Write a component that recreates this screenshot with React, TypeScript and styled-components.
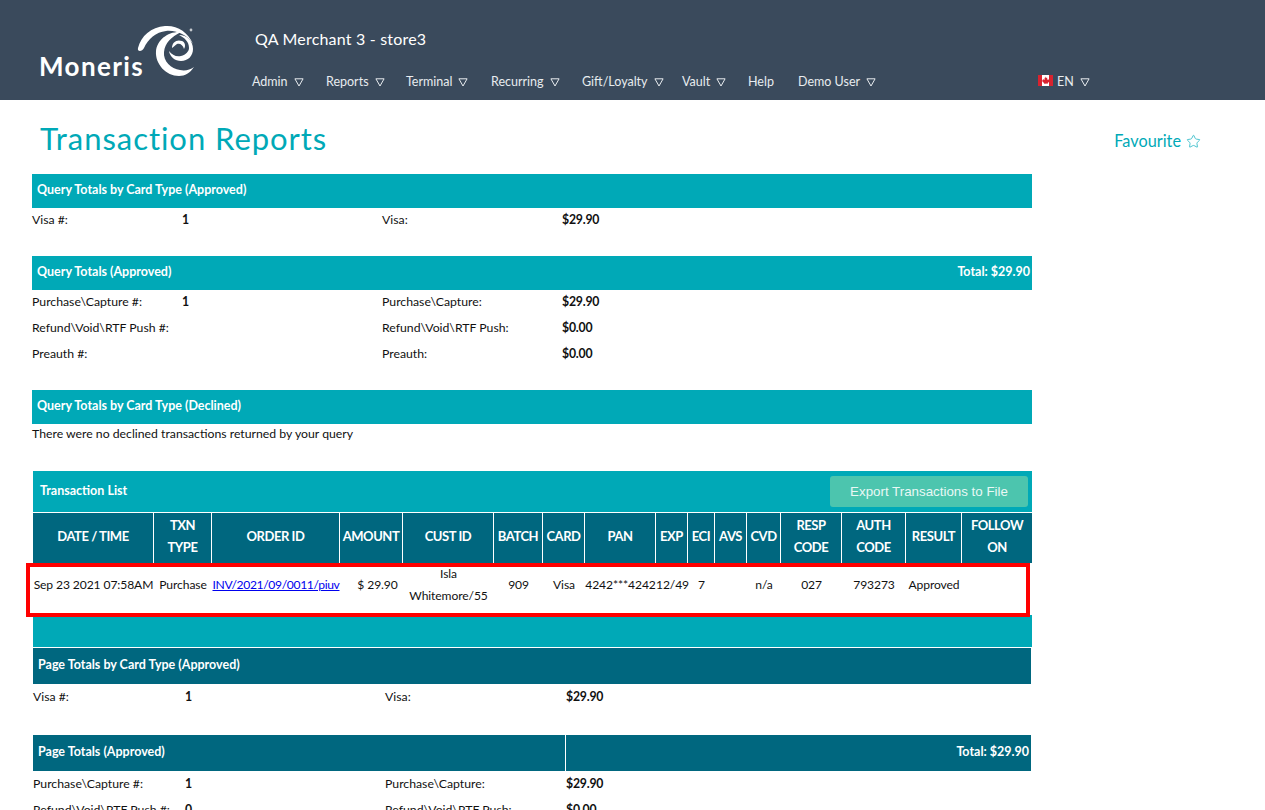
import React from "react";
import styled, { createGlobalStyle } from "styled-components";
import { Star } from "lucide-react";

const teal = "#00a9b7";
const darkTeal = "#00677f";
const font = `Lato, "Open Sans", "Liberation Sans", sans-serif`;

const GlobalStyle = createGlobalStyle`
  html, body {
    margin: 0;
    height: 810px;
    overflow: hidden;
    background: #fff;
    font-family: ${font};
    font-size: 12.25px;
    color: #111;
  }
`;

const Header = styled.header`
  height: 100px;
  background: #3a4a5c;
  display: flex;
  color: #fff;
`;

const LogoWrap = styled.div`
  width: 252px;
  position: relative;
`;

const LogoText = styled.span`
  position: absolute;
  left: 39px;
  top: 50px;
  font-size: 26px;
  font-weight: 700;
  letter-spacing: 1.4px;
  color: #fff;
`;

const Swirl = styled.svg`
  position: absolute;
  left: 135px;
  top: 22px;
`;

const HeaderMain = styled.div`
  flex: 1;
  display: flex;
  flex-direction: column;
`;

const MerchantName = styled.div`
  font-size: 16px;
  padding: 29px 0 0 3px;
  line-height: 20px;
  letter-spacing: 0.2px;
`;

const Nav = styled.nav`
  display: flex;
  margin-top: 24px;
  font-size: 12.5px;
  line-height: 18px;
  color: #e8ecef;
`;

const NavItem = styled.span<{ $width: number }>`
  width: ${(p) => p.$width}px;
  white-space: nowrap;
`;

const Caret = styled.svg`
  margin-left: 6px;
  vertical-align: -1px;
`;

const Flag = styled.svg`
  vertical-align: 0;
  margin-right: 4px;
`;

const TitleRow = styled.div`
  display: flex;
  justify-content: space-between;
  height: 74px;
  padding: 0 64px 0 40px;
`;

const Title = styled.h1`
  margin: 19px 0 0;
  font-size: 31px;
  line-height: 38px;
  font-weight: 400;
  color: ${teal};
  letter-spacing: 0.95px;
`;

const Favourite = styled.div`
  margin-top: 31px;
  height: 20px;
  font-size: 16.3px;
  line-height: 20px;
  color: ${teal};
  display: flex;
  align-items: center;
  gap: 5px;
  & svg {
    color: #35bcc8;
  }
`;

const Section = styled.section<{ $left?: number; $width?: number; $gap?: number }>`
  margin-left: ${(p) => p.$left ?? 32}px;
  width: ${(p) => p.$width ?? 1000}px;
  margin-bottom: ${(p) => p.$gap ?? 0}px;
`;

const Bar = styled.div<{ $dark?: boolean }>`
  height: ${(p) => (p.$dark ? 36 : 34)}px;
  box-sizing: border-box;
  background: ${(p) => (p.$dark ? darkTeal : teal)};
  color: #fff;
  font-weight: 700;
  font-size: 12.5px;
  display: flex;
  align-items: center;
  justify-content: space-between;
  padding: 0 2px 4px 5px;
`;

const SplitBar = styled(Bar)`
  padding: 0;
  & > div {
    height: 100%;
    box-sizing: border-box;
    padding-bottom: 4px;
    display: flex;
    align-items: center;
  }
  & > div:first-child {
    width: 533px;
    padding-left: 5px;
    border-right: 1px solid #fff;
  }
  & > div:last-child {
    padding-right: 2px;
  }
`;

const StatRow = styled.div<{ $wide?: boolean }>`
  display: grid;
  grid-template-columns: ${(p) =>
    p.$wide ? "152px 200px 181px 1fr" : "150px 200px 180px 1fr"};
  height: 26px;
  box-sizing: border-box;
  padding-bottom: ${(p) => (p.$wide ? 0 : 2)}px;
  align-items: center;
  line-height: 22px;
`;

const StatValue = styled.b`
  font-weight: 700;
  letter-spacing: -0.2px;
`;

const Note = styled.div`
  height: 20px;
  line-height: 20px;
`;

const TableSection = styled.section`
  margin: 27px 0 0 33px;
  width: 999px;
  position: relative;
`;

const ListHead = styled.div`
  height: 41px;
  box-sizing: border-box;
  background: ${teal};
  color: #fff;
  font-weight: 700;
  font-size: 12.5px;
  display: flex;
  align-items: flex-start;
  justify-content: space-between;
  padding: 5px 4px 0 7px;
  line-height: 30px;
`;

const ExportButton = styled.button`
  width: 198px;
  height: 31px;
  padding: 0;
  background: #4cc5ae;
  color: #e9f8f5;
  border: 0;
  border-radius: 3px;
  font-family: "Liberation Sans", Arial, sans-serif;
  font-size: 13.33px;
`;

const gridColumns =
  "121px 58px 128px 63px 91px 49px 42px 71px 32px 27px 32px 34px 61px 64px 56px 70px";

const HeadRow = styled.div`
  display: grid;
  grid-template-columns: ${gridColumns};
  height: 50px;
  margin-top: 1px;
  background: ${darkTeal};
`;

const HeadCell = styled.div`
  display: flex;
  align-items: center;
  justify-content: center;
  text-align: center;
  color: #fff;
  font-weight: 700;
  font-size: 13px;
  letter-spacing: -0.45px;
  line-height: 22px;
  box-sizing: border-box;
  padding-bottom: 4px;
  border-right: 1px solid #fff;
  white-space: nowrap;
  &:last-child {
    border-right: 0;
  }
`;

const DataRow = styled.div`
  display: grid;
  grid-template-columns: ${gridColumns};
  height: 52px;
  align-items: center;
  line-height: 22px;
  padding-bottom: 8px;
  box-sizing: border-box;
  font-size: 12.1px;
  letter-spacing: -0.1px;
`;

const DataCell = styled.div<{ $shift?: number }>`
  text-align: center;
  white-space: nowrap;
  padding-left: ${(p) => p.$shift ?? 0}px;
`;

const OrderLink = styled.a`
  color: #0000ee;
  text-decoration: underline;
  letter-spacing: -0.35px;
`;

const Highlight = styled.div`
  position: absolute;
  left: -7px;
  top: 92px;
  width: 1004px;
  height: 54px;
  box-sizing: border-box;
  border: 4px solid #fe0000;
  pointer-events: none;
`;

const Band = styled.div`
  height: 32px;
  background: ${teal};
  border-bottom: 1px solid #fff;
`;

function TriangleDown() {
  return (
    <Caret width="10" height="9" viewBox="0 0 10 9" fill="none" stroke="currentColor" strokeWidth="1">
      <path d="M0.9 0.8h8.2L5 8z" />
    </Caret>
  );
}

function MonerisSwirl() {
  return (
    <Swirl width="65" height="60" viewBox="0 0 65 60" fill="#fff">
      <path d="M3 26C6 14 16 5 30 4c12-1 23 6 28 18C52 13 42 8 31 9 21 10 13 17 9 26c-2 4-7 4-6 0z" />
      <path d="M46 10C33 9 22 18 21 29c-1 13 10 25 23 25 6 0 11-3 15-9-4 3-9 4-14 3-9-1-17-9-16-18 1-9 7-15 17-20z" />
      <path d="M44 13c8 0 14 6 14 14 0 7-5 12-12 12-6 0-11-4-12-10 3 4 7 6 12 5s8-5 8-8c0-6-4-10-10-13z" />
      <path d="M37 26c0-6 5-9 10-7 3 1 4 5 2 8-1-4-4-6-7-5-2 1-3 3-5 4z" />
      <circle cx="56" cy="8" r="1.4" opacity="0.7" />
    </Swirl>
  );
}

function CanadaFlag() {
  return (
    <Flag width="15" height="11" viewBox="0 0 15 11">
      <rect width="15" height="11" fill="#fff" />
      <rect width="4" height="11" fill="#d8232f" />
      <rect x="11" width="4" height="11" fill="#d8232f" />
      <path d="M7.5 1.5l1 1.6.8-.4-.3 2.2 1.2-.9.5.9 1-.1-.5 1.4.4.3-1.9 1.4.2.8-1.8-.3V9h-.4V8.4l-1.8.3.2-.8L4.2 6.5l.4-.3-.5-1.4 1 .1.5-.9 1.2.9-.3-2.2.8.4z" fill="#d8232f" />
    </Flag>
  );
}

const navItems = [
  { label: "Admin", width: 74, caret: true },
  { label: "Reports", width: 80, caret: true },
  { label: "Terminal", width: 85, caret: true },
  { label: "Recurring", width: 91, caret: true },
  { label: "Gift/Loyalty", width: 100, caret: true },
  { label: "Vault", width: 66, caret: true },
  { label: "Help", width: 50, caret: false },
  { label: "Demo User", width: 240, caret: true },
];

const columns = [
  { head: ["DATE / TIME"], value: "Sep 23 2021 07:58AM" },
  { head: ["TXN", "TYPE"], value: "Purchase" },
  { head: ["ORDER ID"], value: "INV/2021/09/0011/piuv" },
  { head: ["AMOUNT"], value: "$ 29.90", shift: 12 },
  { head: ["CUST ID"], value: "Isla Whitemore/55" },
  { head: ["BATCH"], value: "909" },
  { head: ["CARD"], value: "Visa" },
  { head: ["PAN"], value: "4242***4242" },
  { head: ["EXP"], value: "12/49" },
  { head: ["ECI"], value: "7" },
  { head: ["AVS"], value: "" },
  { head: ["CVD"], value: "n/a" },
  { head: ["RESP", "CODE"], value: "027" },
  { head: ["AUTH", "CODE"], value: "793273" },
  { head: ["RESULT"], value: "Approved" },
  { head: ["FOLLOW", "ON"], value: "" },
];

function Stat({ a, b, c, d, wide }: { a: string; b?: string; c: string; d: string; wide?: boolean }) {
  return (
    <StatRow $wide={wide}>
      <span>{a}</span>
      <StatValue>{b}</StatValue>
      <span>{c}</span>
      <StatValue>{d}</StatValue>
    </StatRow>
  );
}

function renderCell(col: { head: string[]; value: string }) {
  if (col.head[0] === "ORDER ID") {
    return <OrderLink href="#">{col.value}</OrderLink>;
  }
  if (col.head[0] === "CUST ID") {
    return (
      <>
        Isla
        <br />
        Whitemore/55
      </>
    );
  }
  return col.value;
}

export default function App() {
  return (
    <>
      <GlobalStyle />
      <Header>
        <LogoWrap>
          <LogoText>Moneris</LogoText>
          <MonerisSwirl />
        </LogoWrap>
        <HeaderMain>
          <MerchantName>QA Merchant 3 - store3</MerchantName>
          <Nav>
            {navItems.map((item) => (
              <NavItem key={item.label} $width={item.width}>
                {item.label}
                {item.caret && <TriangleDown />}
              </NavItem>
            ))}
            <NavItem $width={60}>
              <CanadaFlag />
              EN
              <TriangleDown />
            </NavItem>
          </Nav>
        </HeaderMain>
      </Header>

      <TitleRow>
        <Title>Transaction Reports</Title>
        <Favourite>
          Favourite
          <Star size={15} strokeWidth={1.4} />
        </Favourite>
      </TitleRow>

      <Section $gap={22}>
        <Bar>Query Totals by Card Type (Approved)</Bar>
        <Stat a="Visa #:" b="1" c="Visa:" d="$29.90" />
      </Section>

      <Section $gap={22}>
        <Bar>
          <span>Query Totals (Approved)</span>
          <span>Total: $29.90</span>
        </Bar>
        <Stat a="Purchase\Capture #:" b="1" c="Purchase\Capture:" d="$29.90" />
        <Stat a="Refund\Void\RTF Push #:" c="Refund\Void\RTF Push:" d="$0.00" />
        <Stat a="Preauth #:" c="Preauth:" d="$0.00" />
      </Section>

      <Section>
        <Bar>Query Totals by Card Type (Declined)</Bar>
        <Note>There were no declined transactions returned by your query</Note>
      </Section>

      <TableSection>
        <ListHead>
          <span>Transaction List</span>
          <ExportButton>Export Transactions to File</ExportButton>
        </ListHead>
        <HeadRow>
          {columns.map((col) => (
            <HeadCell key={col.head.join(" ")}>
              <span>
                {col.head.map((line, i) => (
                  <React.Fragment key={line}>
                    {i > 0 && <br />}
                    {line}
                  </React.Fragment>
                ))}
              </span>
            </HeadCell>
          ))}
        </HeadRow>
        <DataRow>
          {columns.map((col) => (
            <DataCell key={col.head.join(" ")} $shift={col.shift}>
              {renderCell(col)}
            </DataCell>
          ))}
        </DataRow>
        <Highlight />
        <Band />
      </TableSection>

      <Section $left={33} $width={998} $gap={25}>
        <Bar $dark>Page Totals by Card Type (Approved)</Bar>
        <Stat wide a="Visa #:" b="1" c="Visa:" d="$29.90" />
      </Section>

      <Section $left={33} $width={998}>
        <SplitBar $dark>
          <div>Page Totals (Approved)</div>
          <div>Total: $29.90</div>
        </SplitBar>
        <Stat wide a="Purchase\Capture #:" b="1" c="Purchase\Capture:" d="$29.90" />
        <Stat wide a="Refund\Void\RTF Push #:" b="0" c="Refund\Void\RTF Push:" d="$0.00" />
      </Section>
    </>
  );
}
